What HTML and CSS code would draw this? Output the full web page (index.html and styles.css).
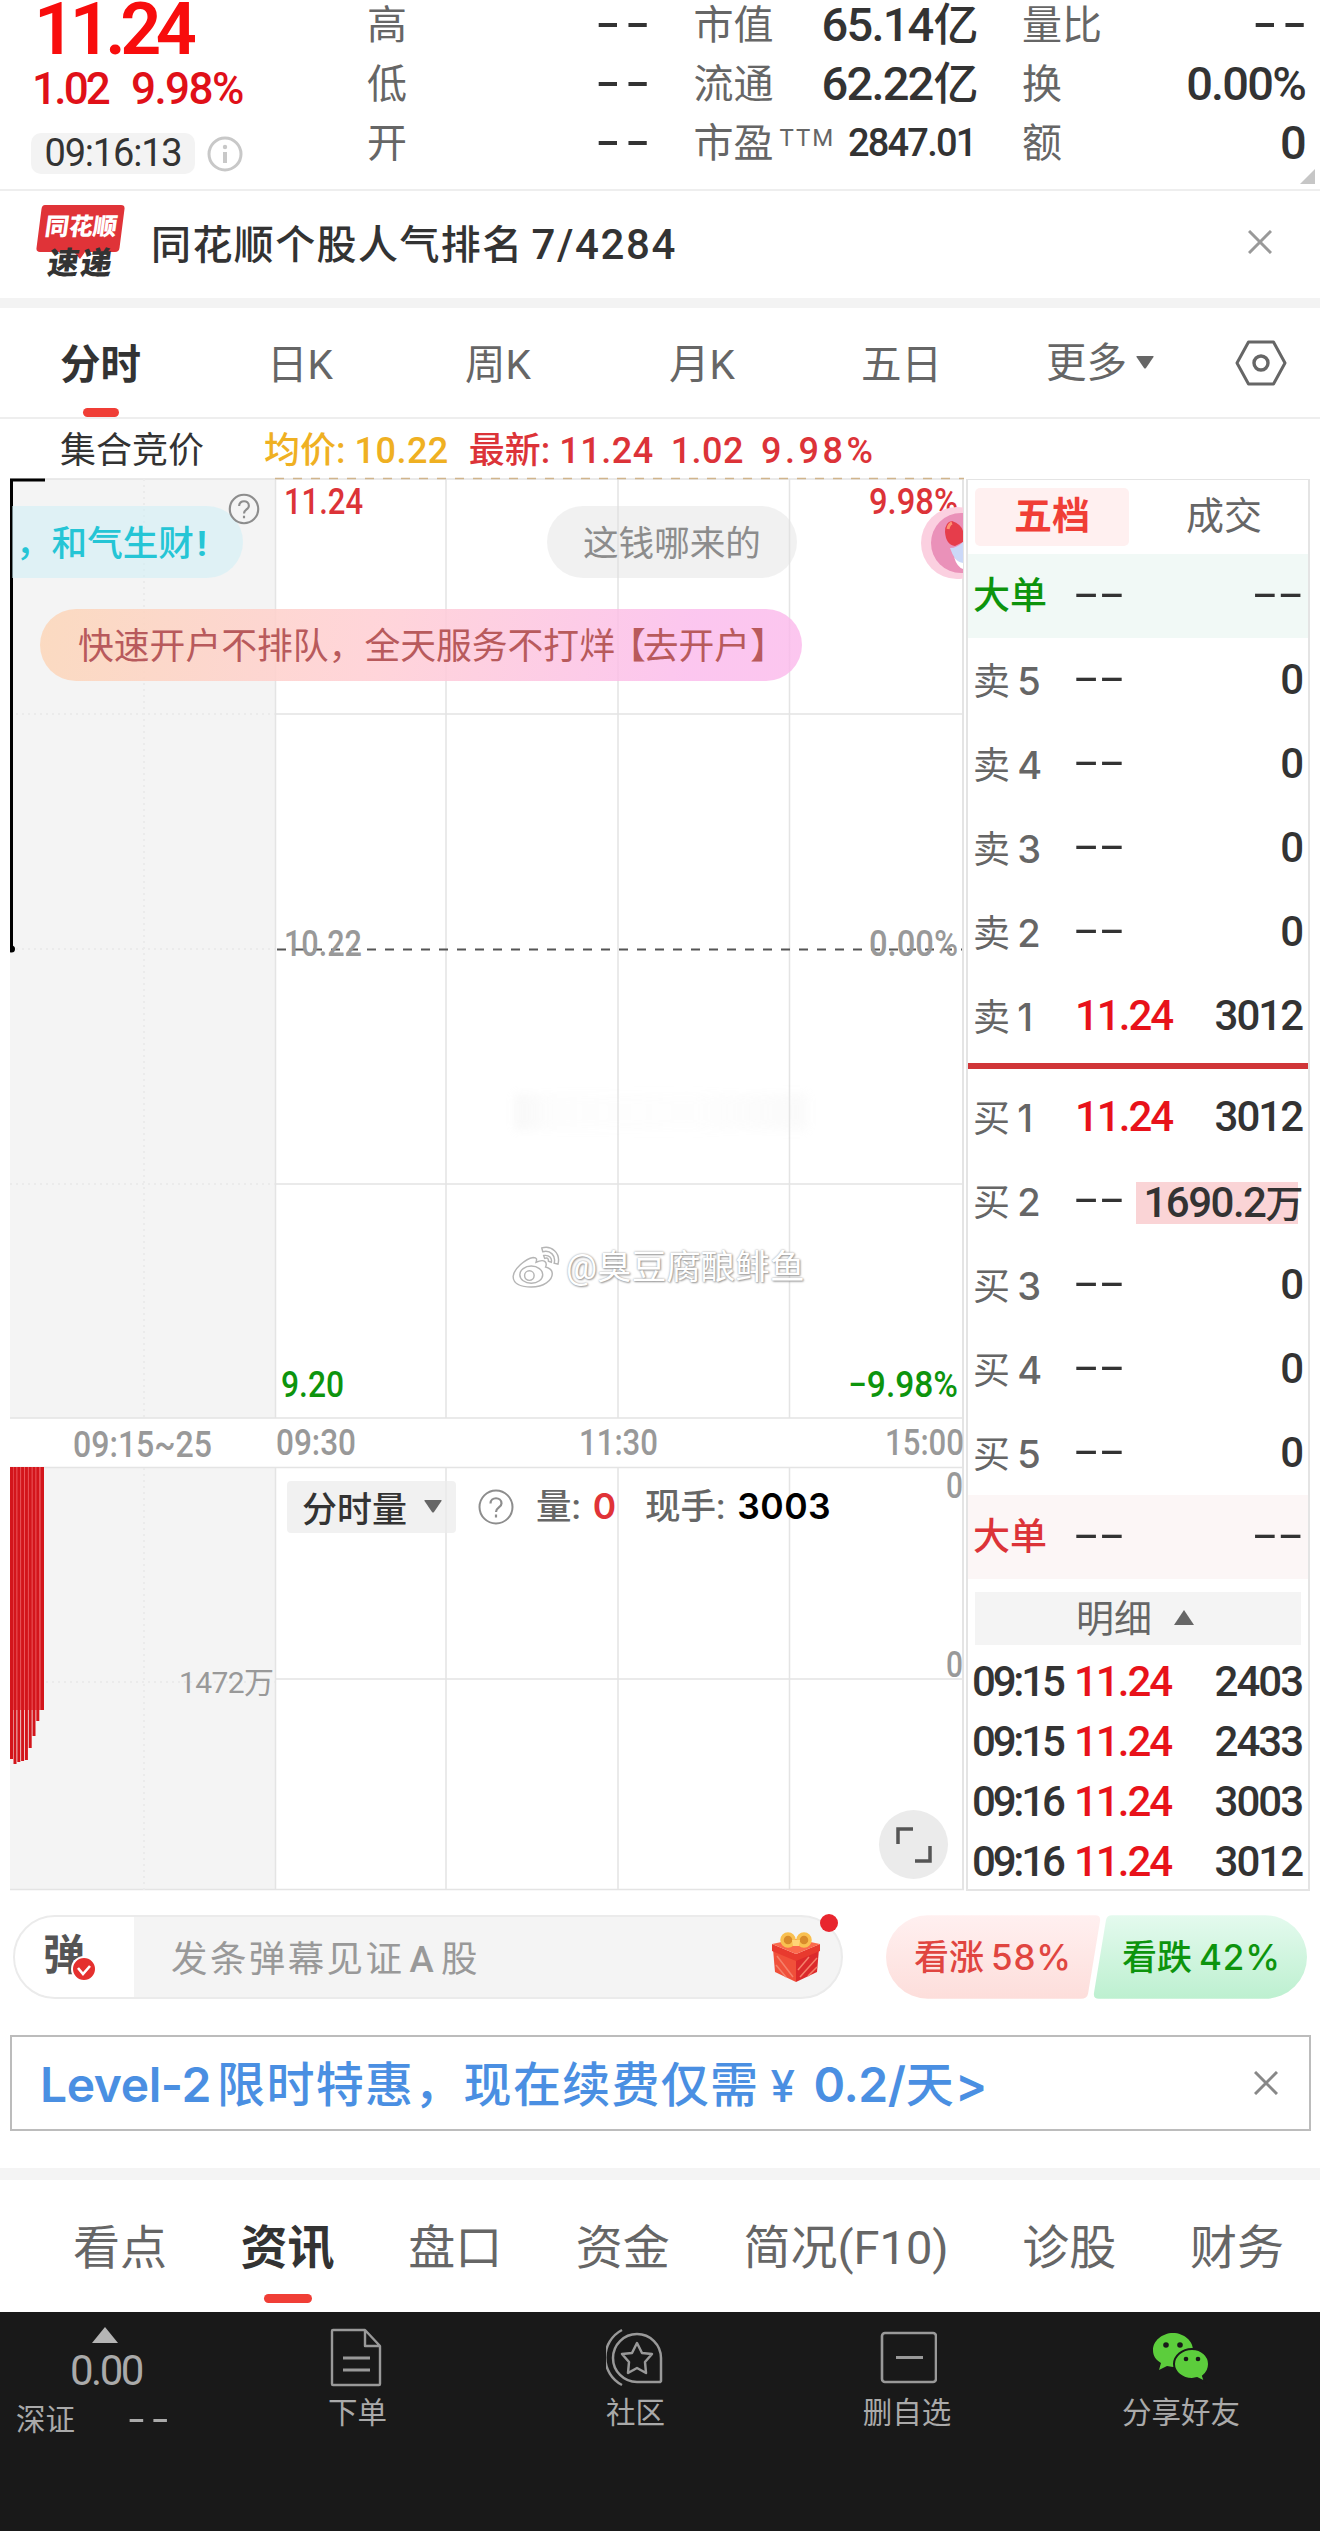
FILE: index.html
```html
<!DOCTYPE html>
<html lang="zh-CN">
<head>
    <meta charset="UTF-8">
    <meta name="viewport" content="width=device-width, initial-scale=1.0">
    <title>个股行情</title>
    <link rel="stylesheet" href="styles.css">
</head>
<body>
    <header class="quote">
        <div class="quote-main">
            <div class="price">11.24</div>
            <div class="change"><span>1.02</span><span class="rate">9.98%</span></div>
            <div class="time-row">
                <span class="time">09:16:13</span>
                <svg class="info" viewBox="0 0 36 36"><circle cx="18" cy="18" r="16" fill="none" stroke="#c8c8c8" stroke-width="3"/><path d="M18 16v11" stroke="#c8c8c8" stroke-width="4"/><circle cx="18" cy="11" r="2.2" fill="#c8c8c8"/></svg>
            </div>
        </div>
        <div class="stats">
            <div class="stat"><span>高</span><b class="dash">--</b></div>
            <div class="stat"><span>市值</span><b>65.14<i>亿</i></b></div>
            <div class="stat"><span>量比</span><b class="dash">--</b></div>
            <div class="stat"><span>低</span><b class="dash">--</b></div>
            <div class="stat"><span>流通</span><b>62.22<i>亿</i></b></div>
            <div class="stat"><span>换</span><b>0.00%</b></div>
            <div class="stat"><span>开</span><b class="dash">--</b></div>
            <div class="stat"><span>市盈<small>TTM</small></span><b class="pe">2847.01</b></div>
            <div class="stat"><span>额</span><b>0</b></div>
        </div>
        <svg class="corner" viewBox="0 0 16 16"><path d="M16 0v16H0z" fill="#c6c6c6"/></svg>
    </header>

    <section class="news">
        <div class="news-logo">
            <svg viewBox="0 0 90 56"><path d="M9 0h76q4 0 3.500 4l-5 39q-.5 4-4.500 4H49l-5 7-6-7H4q-4 0-3.500-4l5-39Q6 0 9 0z" fill="#e03338"/></svg>
            <span class="logo-top">同花顺</span>
            <span class="logo-bottom">速递</span>
        </div>
        <div class="news-text">同花顺个股人气排名<span>7/4284</span></div>
        <svg class="close" viewBox="0 0 24 24"><path d="M1 1l22 22M23 1L1 23" stroke="#999" stroke-width="3"/></svg>
    </section>

    <nav class="chart-tabs">
        <span class="active">分时</span>
        <span>日K</span>
        <span>周K</span>
        <span>月K</span>
        <span>五日</span>
        <span class="more">更多<svg viewBox="0 0 18 13"><path d="M1 0h16q1 0 .5 1L10 12q-1 1-2 0L.5 1Q0 0 1 0z" fill="#666"/></svg></span>
        <svg class="hex" viewBox="0 0 52 46"><path d="M13.500 2h25L50 23 38.500 44h-25L2 23z" fill="none" stroke="#666" stroke-width="3" stroke-linejoin="round"/><circle cx="26" cy="23" r="7" fill="none" stroke="#666" stroke-width="3.400"/></svg>
    </nav>

    <div class="legend">
        <span class="auction">集合竞价</span>
        <span class="avg">均价: <em>10.22</em></span>
        <span class="last">最新: <em>11.24</em></span>
        <span class="last"><em>1.02</em></span>
        <span class="last percent"><em>9.98%</em></span>
    </div>

    <main class="board">
        <div class="charts">
            <svg class="chart" viewBox="10 477 956 1414">
                <rect x="10" y="479" width="265" height="939" fill="#f4f4f4"/>
                <rect x="10" y="1468" width="265" height="422" fill="#f4f4f4"/>
                <g stroke="#e4e4e4" stroke-width="1.500" fill="none">
                    <path d="M10 479H964M275 714H964M275 1184H964M10 1418H964M10 1467.500H964M275 1679H964M10 1889.500H964"/>
                    <path d="M275.500 479V1418M446 479V1418M618 479V1418M789.500 479V1418M275.500 1468V1890M446 1468V1890M618 1468V1890M789.500 1468V1890"/>
                    <path d="M963 479V1890" stroke-width="2"/>
                </g>
                <path d="M144 479V1418M144 1468V1890M10 714H275M10 949H275M10 1184H275M10 1682H275" stroke="#ebebeb" stroke-width="2" stroke-dasharray="2 4"/>
                <path d="M275 478.500H964" stroke="#d0b48c" stroke-width="1.600" stroke-dasharray="9 9"/>
                <path d="M277 949.500H962" stroke="#555" stroke-width="1.800" stroke-dasharray="9 9"/>
                <path d="M11.500 949V480H45" stroke="#000" stroke-width="3" fill="none"/>
                <circle cx="11.500" cy="949" r="3.500"/>

                <g class="axis" font-size="36">
                    <text x="284" y="514" textLength="79" lengthAdjust="spacingAndGlyphs" class="up">11.24</text>
                    <text x="869" y="514" textLength="89" lengthAdjust="spacingAndGlyphs" class="up">9.98%</text>
                    <text x="284" y="956" textLength="78" lengthAdjust="spacingAndGlyphs">10.22</text>
                    <text x="869" y="956" textLength="89" lengthAdjust="spacingAndGlyphs">0.00%</text>
                    <text x="281" y="1397" textLength="63" lengthAdjust="spacingAndGlyphs" class="down">9.20</text>
                    <text x="848" y="1397" textLength="110" lengthAdjust="spacingAndGlyphs" class="down">−9.98%</text>
                    <text x="73" y="1457" textLength="139" lengthAdjust="spacingAndGlyphs">09:15~25</text>
                    <text x="276" y="1455" textLength="80" lengthAdjust="spacingAndGlyphs">09:30</text>
                    <text x="579" y="1455" textLength="79" lengthAdjust="spacingAndGlyphs">11:30</text>
                    <text x="885" y="1455" textLength="79" lengthAdjust="spacingAndGlyphs">15:00</text>
                    <text x="946" y="1498" textLength="17" lengthAdjust="spacingAndGlyphs">0</text>
                    <text x="946" y="1677" textLength="17" lengthAdjust="spacingAndGlyphs">0</text>
                    <text x="179" y="1693" textLength="95" font-size="30" class="thin">1472万</text>
                </g>

                <rect x="10" y="1467" width="34" height="243" fill="#f0686c"/>
                <g fill="#d3151b">
                    <rect x="10" y="1467" width="3" height="292"/>
                    <rect x="13.500" y="1467" width="3" height="297"/>
                    <rect x="17.300" y="1467" width="3" height="295"/>
                    <rect x="21.100" y="1467" width="3" height="294"/>
                    <rect x="24.900" y="1467" width="3" height="293"/>
                    <rect x="28.700" y="1467" width="3" height="281"/>
                    <rect x="32.500" y="1467" width="3" height="269"/>
                    <rect x="36.300" y="1467" width="3" height="254"/>
                    <rect x="40.500" y="1467" width="3.500" height="243"/>
                </g>
            </svg>

            <div class="bubble bubble-cyan">，和气生财<b>!</b></div>
            <div class="bubble bubble-gray">这钱哪来的</div>
            <div class="bubble bubble-ad">快速开户不排队，全天服务不打烊<span>【</span>去开户】</div>
            <svg class="help help-auction" viewBox="0 0 36 36"><circle cx="18" cy="18" r="16" fill="none" stroke="#8d8d8d" stroke-width="2.400"/><path d="M12.500 14.500c0-7 11-7 11 0 0 4-5.500 4-5.500 8.500M18 25.500v3" fill="none" stroke="#8d8d8d" stroke-width="2.400"/></svg>
            <svg class="avatar" viewBox="0 0 43 74">
                <circle cx="37" cy="37" r="36" fill="#fbd0e0"/>
                <circle cx="41" cy="37" r="30" fill="#ea91b9"/>
                <path d="M25 26q0-10 7-11 9 3 11 10v11l-8 4q-9-1-10-14z" fill="#e63d4b"/>
                <path d="M28 23q1-5 4-6" stroke="#ff9273" stroke-width="3" fill="none"/>
                <path d="M30 42q7 0 13-6v25q-9-7-13-19z" fill="#cbd8f8"/>
                <path d="M34 51q3 10 9 12v-6q-6-1-9-6z" fill="#fff"/>
            </svg>

            <div class="smudge"></div>
            <div class="watermark">
                <svg viewBox="0 0 52 44"><g fill="#fff" stroke="#b5b5b5" stroke-width="1.500"><path d="M22 12c-8 1-21 13-21 20 0 8 9 11 19 11 13 0 22-7 22-14 0-4-3-6-7-7 2-5-1-9-10-5 1-3 1-5-3-5z"/><ellipse cx="20" cy="30" rx="12" ry="9"/><circle cx="18" cy="31" r="5"/><path d="M31 2c10-3 20 5 17 17l-4-1c2-8-4-14-12-12zM33 10c6-1 9 3 8 7l-3-1c0-3-1-4-4-3z"/></g></svg>
                <span>@臭豆腐酿鲱鱼</span>
            </div>

            <div class="volume-bar">
                <button class="volume-select">分时量<svg viewBox="0 0 18 13"><path d="M1 0h16q1 0 .5 1L10 12q-1 1-2 0L.5 1Q0 0 1 0z" fill="#666"/></svg></button>
                <svg class="help" viewBox="0 0 36 36"><circle cx="18" cy="18" r="16.500" fill="none" stroke="#8d8d8d" stroke-width="2"/><path d="M12.500 14.500c0-7 11-7 11 0 0 4-5.500 4-5.500 8.500M18 25.500v3" fill="none" stroke="#8d8d8d" stroke-width="2.200"/></svg>
                <span class="vol">量: <b class="up">0</b></span>
                <span class="hand">现手: <b>3003</b></span>
            </div>

            <button class="expand"><svg viewBox="0 0 36 36"><path d="M2 17V2h15M34 19v15H19" fill="none" stroke="#555" stroke-width="3.500"/></svg></button>
        </div>

        <aside class="book">
            <div class="book-tabs"><span class="active">五档</span><span>成交</span></div>
            <div class="level big sell"><span>大单</span><b class="dash">--</b><b class="dash">--</b></div>
            <div class="level"><span>卖 <em>5</em></span><b class="dash">--</b><b>0</b></div>
            <div class="level"><span>卖 <em>4</em></span><b class="dash">--</b><b>0</b></div>
            <div class="level"><span>卖 <em>3</em></span><b class="dash">--</b><b>0</b></div>
            <div class="level"><span>卖 <em>2</em></span><b class="dash">--</b><b>0</b></div>
            <div class="level"><span>卖 <em>1</em></span><b class="red">11.24</b><b>3012</b></div>
            <div class="split"></div>
            <div class="level"><span>买 <em>1</em></span><b class="red">11.24</b><b>3012</b></div>
            <div class="level"><span>买 <em>2</em></span><b class="dash">--</b><b class="flash">1690.2<i>万</i></b></div>
            <div class="level"><span>买 <em>3</em></span><b class="dash">--</b><b>0</b></div>
            <div class="level"><span>买 <em>4</em></span><b class="dash">--</b><b>0</b></div>
            <div class="level"><span>买 <em>5</em></span><b class="dash">--</b><b>0</b></div>
            <div class="level big buy"><span>大单</span><b class="dash">--</b><b class="dash">--</b></div>
            <div class="detail-head">明细<svg viewBox="0 0 20 15"><path d="M10 0l10 15H0z" fill="#666"/></svg></div>
            <div class="tick"><span>09:15</span><b class="red">11.24</b><b>2403</b></div>
            <div class="tick"><span>09:15</span><b class="red">11.24</b><b>2433</b></div>
            <div class="tick"><span>09:16</span><b class="red">11.24</b><b>3003</b></div>
            <div class="tick"><span>09:16</span><b class="red">11.24</b><b>3012</b></div>
        </aside>
    </main>

    <section class="barrage">
        <div class="barrage-input">
            <div class="barrage-toggle">弹<svg viewBox="0 0 26 26"><circle cx="13" cy="13" r="12" fill="#e5302e" stroke="#fff" stroke-width="2"/><path d="M7 12l5 6 7-8" fill="none" stroke="#fff" stroke-width="2.600"/></svg></div>
            <span class="placeholder">发条弹幕见证<i>A</i>股</span>
            <svg class="gift" viewBox="0 0 48 52">
                <path d="M1 18l23 10v23L3 41z" fill="#f0503a"/>
                <path d="M47 18L24 28v23l21-10z" fill="#dc2a2c"/>
                <path d="M5 25l16 21M4 34l10 12M45 27L28 46M45 36l-9 9M37 26L26 39" stroke="#f5806a" stroke-width="1.500"/>
                <path d="M0 13l24 10 24-10v7L24 30 0 20z" fill="#e83a2e"/>
                <path d="M0 13l24-5 24 5-24 10z" fill="#fb6a4c"/>
                <g fill="#d98b2b" stroke="#f9c050" stroke-width="3.500"><ellipse cx="16" cy="9" rx="6" ry="6"/><ellipse cx="32" cy="9" rx="6" ry="6"/></g>
                <path d="M20 9h8l-1 6h-6z" fill="#ffd577"/>
            </svg>
            <i class="red-dot"></i>
        </div>
        <div class="votes">
            <svg viewBox="0 0 424 84">
                <defs>
                    <linearGradient id="voteUp" x1="0" y1="0" x2="0" y2="1"><stop offset="0" stop-color="#fff0f0"/><stop offset="1" stop-color="#fddedb"/></linearGradient>
                    <linearGradient id="voteDown" x1="0" y1="0" x2="0" y2="1"><stop offset="0" stop-color="#e4faee"/><stop offset="1" stop-color="#bdf0d0"/></linearGradient>
                </defs>
                <path d="M42 0h168q6 0 5 6l-12 73q-1 5-7 5H42a42 42 0 0 1 0-84z" fill="url(#voteUp)"/>
                <path d="M227 0h154a42 42 0 0 1 0 84H214q-6 0-5-6l12-73q1-5 6-5z" fill="url(#voteDown)"/>
            </svg>
            <span class="vote-up">看涨<b>58%</b></span>
            <span class="vote-down">看跌<b>42%</b></span>
        </div>
    </section>

    <section class="promo">
        <span><b class="level2">Level-2</b>限时特惠，现在续费仅需<b class="yen">¥</b><b>0.2/</b>天<b>&gt;</b></span>
        <svg class="close" viewBox="0 0 24 24"><path d="M1 1l22 22M23 1L1 23" stroke="#888" stroke-width="3"/></svg>
    </section>

    <nav class="info-tabs">
        <span>看点</span>
        <span class="active">资讯</span>
        <span>盘口</span>
        <span>资金</span>
        <span>简况(F10)</span>
        <span>诊股</span>
        <span>财务</span>
    </nav>

    <footer class="toolbar">
        <div class="index">
            <svg viewBox="0 0 26 16"><path d="M13 0l13 16H0z" fill="#b5b5b5"/></svg>
            <div class="index-value">0.00</div>
            <div class="index-name"><span>深证</span><b class="dash">--</b></div>
        </div>
        <div class="tool order">
            <svg viewBox="0 0 60 60" width="60" height="60"><g fill="none" stroke="#999" stroke-width="2.400" stroke-linejoin="round"><path d="M5 3h32l15 16v38q0 1-1 1H5q-1 0-1-1V4q0-1 1-1zM37 3v16h15"/><path d="M15 31h27M15 43h27" stroke-width="3"/></g></svg>
            <span>下单</span>
        </div>
        <div class="tool community">
            <svg viewBox="0 0 60 60" width="60" height="60"><g fill="none" stroke="#999" stroke-width="2.500" stroke-linejoin="round"><path d="M55 54V31a24 24 0 1 0-24 24h23zM16 3a31 31 0 0 0 0 55"/><path d="M31 16l5 10 10 1-7 8 1 11-9-5-9 5 1-11-7-8 10-1z"/></g></svg>
            <span>社区</span>
        </div>
        <div class="tool remove">
            <svg viewBox="0 0 60 60" width="60" height="60"><g fill="none" stroke="#999" stroke-width="2.600"><rect x="5" y="6" width="54" height="49" rx="3"/><path d="M19 30.500h27" stroke-width="3"/></g></svg>
            <span>删自选</span>
        </div>
        <div class="tool share">
            <svg viewBox="0 0 60 60" width="60" height="60"><path d="M22 6C11 6 2 14 2 23c0 6 3 10 8 13l-2 7 8-4 6 1c11 0 20-8 20-17S33 6 22 6z" fill="#5ccd3c"/><path d="M41 22c-10 0-18 7-18 15s8 15 18 15l5-1 8 4-2-6c4-3 6-7 6-12 0-8-7-15-17-15z" fill="#5ccd3c" stroke="#191919" stroke-width="2"/><g fill="#191919"><circle cx="15" cy="18" r="2.800"/><circle cx="29" cy="18" r="2.800"/><circle cx="35" cy="32" r="2.300"/><circle cx="47" cy="32" r="2.300"/></g></svg>
            <span>分享好友</span>
        </div>
    </footer>
</body>
</html>
```

FILE: styles.css
```css
* {
    box-sizing: border-box;
}
body {
    margin: 0;
    width: 1320px;
    height: 2531px;
    overflow: hidden;
    background: #fff;
    color: #333;
    font-family: Roboto, "Noto Sans CJK SC", sans-serif;
}
i, em {
    font-style: normal;
}
b, em {
    font-weight: 500;
}
button {
    border: none;
    padding: 0;
    font-family: inherit;
    color: inherit;
}
svg {
    display: block;
    flex: none;
}
.up {
    color: #e03338;
}
.red {
    color: #e8121a;
}

/* quote header */
.quote {
    position: relative;
    display: flex;
    height: 191px;
    border-bottom: 2px solid #eee;
}
.quote-main {
    width: 367px;
    padding-left: 31px;
}
.price {
    height: 60px;
    padding-left: 3px;
    font-size: 72px;
    line-height: 60px;
    font-weight: 600;
    letter-spacing: -5.500px;
    color: #f80d0d;
}
.change {
    display: flex;
    gap: 23px;
    height: 58px;
    padding-left: 1px;
    font-size: 44px;
    line-height: 58px;
    font-weight: 500;
    letter-spacing: -2.800px;
    color: #e01018;
}
.change .rate {
    letter-spacing: -1.600px;
}
.time-row {
    display: flex;
    align-items: center;
    gap: 12px;
    padding-top: 15px;
}
.time {
    width: 164px;
    height: 41px;
    border-radius: 10px;
    background: #f3f3f3;
    font-size: 38px;
    line-height: 40px;
    letter-spacing: -1.200px;
    text-align: center;
}
.info {
    width: 36px;
    height: 36px;
}
.stats {
    display: grid;
    grid-template-columns: 280px 282px 282px;
    grid-auto-rows: 59px;
    column-gap: 46.500px;
    margin-top: -4px;
}
.stat {
    display: flex;
    justify-content: space-between;
    font-size: 40px;
    line-height: 60px;
    color: #666;
    white-space: nowrap;
}
.stat b {
    margin-right: -1px;
    font-size: 47px;
    line-height: 58px;
    letter-spacing: -1.800px;
    color: #333;
}
.stat b i {
    margin: 0 -2px 0 1px;
    font-size: 45px;
    letter-spacing: 0;
}
.stat small {
    margin-left: 6px;
    font-size: 24px;
    letter-spacing: 2px;
    vertical-align: 11px;
    line-height: 1;
}
.stat .pe {
    margin-right: 0;
    padding-right: 0;
    font-size: 38px;
    letter-spacing: -1.800px;
}
b.dash {
    font-family: Inter, sans-serif;
    font-size: 48px;
    font-weight: 500;
    letter-spacing: 4px;
}
.stat .dash {
    margin-right: -6px;
    transform: translateY(-2px) scale(1.18, .9);
    transform-origin: 90% 50%;
    letter-spacing: 3px;
}
.corner {
    position: absolute;
    right: 5px;
    bottom: 5px;
    width: 15px;
    height: 15px;
}

/* news strip */
.news {
    display: flex;
    align-items: center;
    height: 117px;
    padding: 0 48px 5px 36px;
    border-bottom: 10px solid #f3f3f3;
}
.news-logo {
    position: relative;
    width: 90px;
    height: 74px;
    font-weight: 900;
    text-align: center;
}
.logo-top, .logo-bottom {
    position: absolute;
    left: 0;
    width: 90px;
    transform: skewX(-8deg);
}
.logo-top {
    top: 0;
    font-size: 24px;
    line-height: 44px;
    color: #fff;
}
.logo-bottom {
    top: 42px;
    font-size: 31px;
    line-height: 34px;
    letter-spacing: 2px;
}
.news-text {
    flex: 1;
    padding-left: 25px;
    font-size: 40px;
    font-weight: 500;
    letter-spacing: 1.400px;
}
.news-text span {
    margin-left: 8px;
    font-size: 42px;
    letter-spacing: 1.600px;
}
.close {
    width: 24px;
    height: 24px;
}

/* period tabs */
.chart-tabs {
    display: grid;
    grid-template-columns: 207px 198px 204px 192px 185px 189px auto;
    justify-items: start;
    align-items: center;
    height: 111px;
    padding-left: 60px;
    border-bottom: 2px solid #eee;
    font-size: 40.500px;
    line-height: 114px;
    color: #666;
}
.chart-tabs span {
    height: 109px;
}
.chart-tabs .active, .info-tabs .active {
    position: relative;
    font-weight: 700;
    color: #333;
}
.chart-tabs .active::after, .info-tabs .active::after {
    content: "";
    position: absolute;
    left: 50%;
    bottom: 0;
    width: 36px;
    height: 9px;
    margin-left: -18px;
    border-radius: 5px;
    background: #f03e36;
}
.more {
    display: flex;
    align-items: center;
    gap: 9px;
}
.more svg, .volume-select svg {
    width: 18px;
    height: 13px;
}
.hex {
    width: 52px;
    height: 46px;
}

.legend {
    display: flex;
    height: 58px;
    padding-left: 60px;
    gap: 20px;
    font-size: 36px;
    line-height: 65px;
    white-space: pre;
}
.legend em {
    letter-spacing: .5px;
}
.auction {
    width: 184px;
}
.avg {
    color: #efb022;
}
.last {
    color: #dc3338;
}
.last + .last {
    margin-left: -3px;
}
.legend .percent em {
    letter-spacing: 3.500px;
}
.avg, .last {
    font-weight: 500;
}

/* charts + order book */
.board {
    display: flex;
    height: 1414px;
    padding-left: 10px;
}
.charts {
    position: relative;
    width: 956px;
}
.chart {
    width: 956px;
    height: 1414px;
}
.axis text {
    fill: #999;
    font-weight: 500;
}
.axis .thin {
    font-weight: 400;
}
.axis .up {
    fill: #dc3338;
}
.axis .down {
    fill: #0d940d;
}
.bubble {
    position: absolute;
    height: 72px;
    border-radius: 36px;
    font-size: 35.600px;
    line-height: 76px;
    white-space: nowrap;
}
.bubble-cyan {
    left: 2px;
    top: 29px;
    width: 231px;
    padding-left: 4px;
    border-radius: 0 36px 36px 0;
    background: rgba(205, 238, 245, .55);
    color: #25c5d5;
    font-weight: 500;
}
.bubble-cyan b {
    margin-left: 3px;
    font-weight: 700;
}
.bubble-gray {
    left: 537px;
    top: 29px;
    width: 250px;
    background: rgba(225, 225, 225, .45);
    color: #8c8c8c;
    text-align: center;
}
.bubble-ad {
    left: 30px;
    top: 132px;
    width: 762px;
    padding-left: 38px;
    background: linear-gradient(100deg, rgba(252, 214, 184, .85), rgba(255, 208, 214, .9) 45%, rgba(251, 184, 235, .8) 85%);
    color: #b85a5c;
    font-size: 35.800px;
}
.bubble-ad span {
    margin: 0 -3px 0 -5px;
}
.help {
    width: 36px;
    height: 36px;
}
.help-auction {
    position: absolute;
    left: 218px;
    top: 16px;
    width: 32px;
    height: 32px;
}
.avatar {
    position: absolute;
    left: 910px;
    top: 29px;
    width: 43px;
    height: 74px;
}
.smudge {
    position: absolute;
    left: 505px;
    top: 617px;
    width: 292px;
    height: 36px;
    background: linear-gradient(90deg, rgba(210, 210, 210, .4), rgba(235, 235, 235, .25) 12%, rgba(240, 240, 240, .2) 60%, rgba(225, 225, 225, .4));
    filter: blur(5px);
    opacity: .4;
}
.watermark {
    position: absolute;
    left: 502px;
    top: 767px;
    display: flex;
    align-items: center;
    gap: 4px;
    font-size: 34.600px;
    line-height: 46px;
    color: #fff;
    text-shadow: 0 0 2px #999, 1px 1px 2px #999;
}
.watermark svg {
    width: 50px;
    height: 42px;
}
.volume-bar {
    position: absolute;
    left: 277px;
    top: 1003px;
    display: flex;
    align-items: center;
    font-size: 35.500px;
    line-height: 54px;
    font-weight: 500;
    color: #666;
    white-space: pre;
}
.volume-select {
    display: flex;
    align-items: center;
    gap: 17px;
    width: 169px;
    height: 52px;
    margin-right: 22px;
    padding: 0 0 2px 15px;
    border-radius: 4px;
    background: rgba(235, 235, 235, .7);
    font-size: 35px;
    font-weight: 500;
    color: #333;
}
.vol {
    width: 109px;
    margin-left: 22px;
}
.vol b, .hand b {
    margin-left: 3px;
    font-family: Inter, sans-serif;
    font-weight: 600;
}
.hand b {
    color: #000;
    letter-spacing: .5px;
}
.expand {
    position: absolute;
    left: 869px;
    top: 1333px;
    display: flex;
    align-items: center;
    justify-content: center;
    width: 69px;
    height: 69px;
    border-radius: 50%;
    background: #ebebeb;
}
.expand svg {
    width: 36px;
    height: 36px;
}
.book {
    width: 344px;
    margin-top: 2px;
    border: 2px solid #e4e4e4;
    border-width: 1px 2px 2px;
}
.book-tabs {
    display: flex;
    height: 74px;
    padding: 8px 7px;
    font-size: 38px;
    line-height: 57px;
    text-align: center;
    color: #666;
}
.book-tabs span {
    flex: 1;
    padding-left: 18px;
}
.book-tabs .active {
    flex: none;
    width: 154px;
    padding-left: 0;
    border-radius: 5px;
    background: #fff0f0;
    font-weight: 700;
    color: #f03e36;
}
.level, .tick {
    display: grid;
    grid-template-columns: 102px 100px minmax(0, 1fr);
    height: 84px;
    padding: 0 6px 0 5px;
    font-size: 42px;
    line-height: 84px;
    letter-spacing: -2px;
    white-space: nowrap;
}
.level > :last-child, .tick > :last-child {
    text-align: right;
}
.level span {
    font-size: 37px;
    line-height: 86px;
    letter-spacing: -1px;
    color: #666;
}
.level em {
    font-family: Inter, sans-serif;
    font-size: 38px;
}
.level .dash {
    justify-self: start;
    margin-left: -3px;
    font-weight: 400;
    letter-spacing: -2px;
    transform: translateY(-3px) scale(1.28, .85);
    transform-origin: 0 50%;
}
.level .dash:last-child {
    justify-self: end;
    transform-origin: 100% 50%;
}
.level.big span {
    font-weight: 500;
    letter-spacing: 0;
}
.sell {
    background: #f1f9f6;
}
.level.sell span {
    color: #0d940d;
}
.buy {
    background: #fcf6f6;
}
.level.buy span {
    color: #dc3338;
}
.split {
    height: 6px;
    margin: 5px 0 6px;
    background: #d03538;
}
.level .flash {
    justify-self: end;
    align-self: center;
    width: 166px;
    height: 42px;
    line-height: 42px;
    letter-spacing: -1.500px;
    background: linear-gradient(#fad4d6, #fad4d6) no-repeat 0 0 / 162px 42px;
}
.flash i {
    font-size: 38px;
}
.detail-head {
    display: flex;
    align-items: center;
    justify-content: center;
    gap: 22px;
    height: 53px;
    margin: 13px 7px 7px;
    padding: 0 6px 6px 0;
    background: #f4f4f4;
    font-size: 38px;
    color: #666;
}
.detail-head svg {
    width: 20px;
    height: 15px;
    margin-top: 4px;
}
.tick {
    height: 60px;
    padding-left: 4px;
    line-height: 60px;
}
.tick span {
    font-weight: 500;
    letter-spacing: -3.200px;
}

/* barrage input and votes */
.barrage {
    display: flex;
    justify-content: space-between;
    height: 108px;
    margin-top: 24px;
    padding: 0 12px 0 13px;
}
.barrage-input {
    position: relative;
    display: flex;
    align-items: center;
    width: 830px;
    height: 84px;
    border: 2px solid #ebebeb;
    border-radius: 42px;
    background: #f4f4f4;
}
.barrage-toggle {
    position: relative;
    width: 119px;
    height: 80px;
    padding-left: 28px;
    border-radius: 40px 0 0 40px;
    background: #fff;
    font-size: 42px;
    line-height: 78px;
    font-weight: 700;
    color: #555;
}
.barrage-toggle svg {
    position: absolute;
    left: 56px;
    top: 39px;
    width: 26px;
    height: 26px;
}
.placeholder {
    flex: 1;
    padding: 0 0 2px 37px;
    font-size: 36.500px;
    letter-spacing: 2.400px;
    color: #999;
}
.placeholder i {
    margin: 0 5px;
    font-weight: 500;
}
.gift {
    width: 48px;
    height: 52px;
    margin-right: 21px;
}
.red-dot {
    position: absolute;
    right: 3px;
    top: -3px;
    width: 18px;
    height: 18px;
    border-radius: 50%;
    background: #e8262e;
}
.votes {
    position: relative;
    width: 422px;
    height: 84px;
}
.votes svg {
    width: 422px;
    height: 84px;
}
.votes span {
    position: absolute;
    top: 0;
    font-size: 35px;
    line-height: 85px;
    font-weight: 500;
    white-space: nowrap;
}
.votes b {
    margin-left: 7px;
    font-family: Inter, sans-serif;
    font-size: 35px;
    letter-spacing: .8px;
}
.vote-up {
    left: 28px;
    color: #e04540;
}
.vote-down {
    left: 236px;
    color: #0d940d;
}

.promo {
    display: flex;
    align-items: center;
    justify-content: space-between;
    height: 96px;
    margin: 12px 9px 37px 10px;
    padding: 0 31px 0 28px;
    border: 2px solid #bcbcbc;
    font-size: 48px;
    font-weight: 500;
    letter-spacing: 1.300px;
    color: #4a8fe2;
}
.promo span {
    display: block;
    padding-bottom: 4px;
    white-space: nowrap;
}
.promo b {
    font-family: Inter, sans-serif;
    font-size: 48px;
    font-weight: 600;
    letter-spacing: -.4px;
}
.promo .level2 {
    margin-right: 6px;
}
.promo .yen {
    margin: 0 19px 0 11px;
    font-size: 44px;
    font-weight: 500;
}

/* bottom tabs */
.info-tabs {
    display: flex;
    justify-content: space-between;
    height: 144px;
    padding: 0 36px 0 73px;
    border-top: 12px solid #f4f4f4;
    font-size: 47px;
    line-height: 135px;
    color: #666;
}
.info-tabs .active::after {
    bottom: 9px;
    width: 48px;
    margin-left: -24px;
}

.toolbar {
    display: flex;
    height: 219px;
    background: #191919;
    font-size: 29.500px;
    color: #aaa;
}
.index {
    width: 210px;
}
.index svg {
    width: 26px;
    height: 16px;
    margin: 15px 0 0 92px;
}
.index-value {
    padding-left: 70px;
    font-size: 42px;
    line-height: 56px;
    letter-spacing: -2.500px;
}
.index-name {
    display: flex;
    gap: 54px;
    padding-left: 16px;
    line-height: 42px;
}
.index-name .dash {
    font-size: 38px;
    line-height: 38px;
    transform: scale(1.1, .85);
}
.tool {
    display: flex;
    flex-direction: column;
    align-items: center;
    padding-top: 15px;
}
.tool span {
    line-height: 52px;
}
.order {
    width: 295px;
}
.community {
    width: 261px;
}
.remove {
    width: 282px;
}
.share {
    width: 266px;
}
```
